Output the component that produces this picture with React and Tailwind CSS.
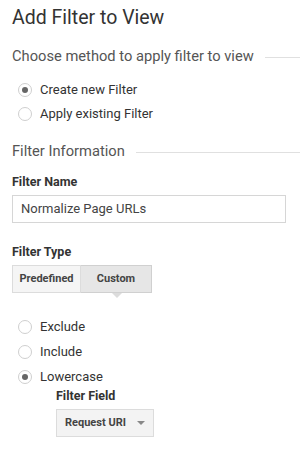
import React from 'react';

function Radio({ label, checked = false, tall = false }) {
  return (
    <div className={tall ? 'flex items-center h-[25px]' : 'flex items-center h-[24px]'}>
      <span className="w-[14px] h-[14px] rounded-full border border-[#cfcfcf] bg-white flex items-center justify-center ml-[6px] mr-[8px]">
        {checked && <span className="w-[6px] h-[6px] rounded-full bg-[#666]" />}
      </span>
      <span className="text-[13px] text-[#333]">{label}</span>
    </div>
  );
}

function SectionHeading({ children }) {
  return (
    <div className="flex items-center h-[20px]">
      <span className="text-[14.7px] leading-[20px] text-[#555] whitespace-nowrap">{children}</span>
      <span className="flex-1 ml-[11px] border-t border-[#e0e0e0] mt-[3px]" />
    </div>
  );
}

export default function App() {
  return (
    <div className="w-[300px] h-[451px] bg-white overflow-hidden pl-[12px] font-['Roboto',sans-serif]">
      <h1 className="text-[19.5px] leading-[28px] pt-[4px] text-[#333]">Add Filter to View</h1>

      <div className="mt-[14px]">
        <SectionHeading>Choose method to apply filter to view</SectionHeading>
      </div>

      <div className="mt-[12px]">
        <Radio label="Create new Filter" checked />
        <Radio label="Apply existing Filter" />
      </div>

      <div className="mt-[15px]">
        <SectionHeading>Filter Information</SectionHeading>
      </div>

      <div className="mt-[13px] text-[12.5px] leading-[16px] font-bold text-[#333]">Filter Name</div>
      <div className="mt-[5px] w-[274px] h-[28px] border border-[#d6d6d6] flex items-center px-[8px] text-[13px] text-[#444]">
        Normalize Page URLs
      </div>

      <div className="mt-[21px] text-[12.5px] leading-[16px] font-bold text-[#333]">Filter Type</div>
      <div className="mt-[5px] flex relative w-[140px] h-[28px] text-[11px] font-bold text-[#444]">
        <div className="w-[69px] flex items-center justify-center bg-[#f5f5f5] border border-[#dcdcdc]">Predefined</div>
        <div className="w-[71px] flex items-center justify-center bg-[#e6e6e6] border border-l-0 border-[#d0d0d0]">Custom</div>
        <span className="absolute left-[100px] top-[28px] w-0 h-0 border-l-[5px] border-r-[5px] border-t-[5px] border-l-transparent border-r-transparent border-t-[#dcdcdc]" />
      </div>

      <div className="mt-[21px]">
        <Radio label="Exclude" tall />
        <Radio label="Include" tall />
        <Radio label="Lowercase" checked tall />
      </div>

      <div className="pl-[44px] -mt-[1px]">
        <div className="text-[12.5px] leading-[16px] font-bold text-[#333]">Filter Field</div>
        <div className="mt-[5px] w-[98px] h-[28px] flex items-center bg-[#f3f3f3] border border-[#dcdcdc] pl-[8px] text-[11px] font-bold text-[#444]">
          <span className="flex-1 whitespace-nowrap">Request URI</span>
          <span className="mr-[8px] w-0 h-0 border-l-[4px] border-r-[4px] border-t-[4px] border-l-transparent border-r-transparent border-t-[#888]" />
        </div>
      </div>
    </div>
  );
}
